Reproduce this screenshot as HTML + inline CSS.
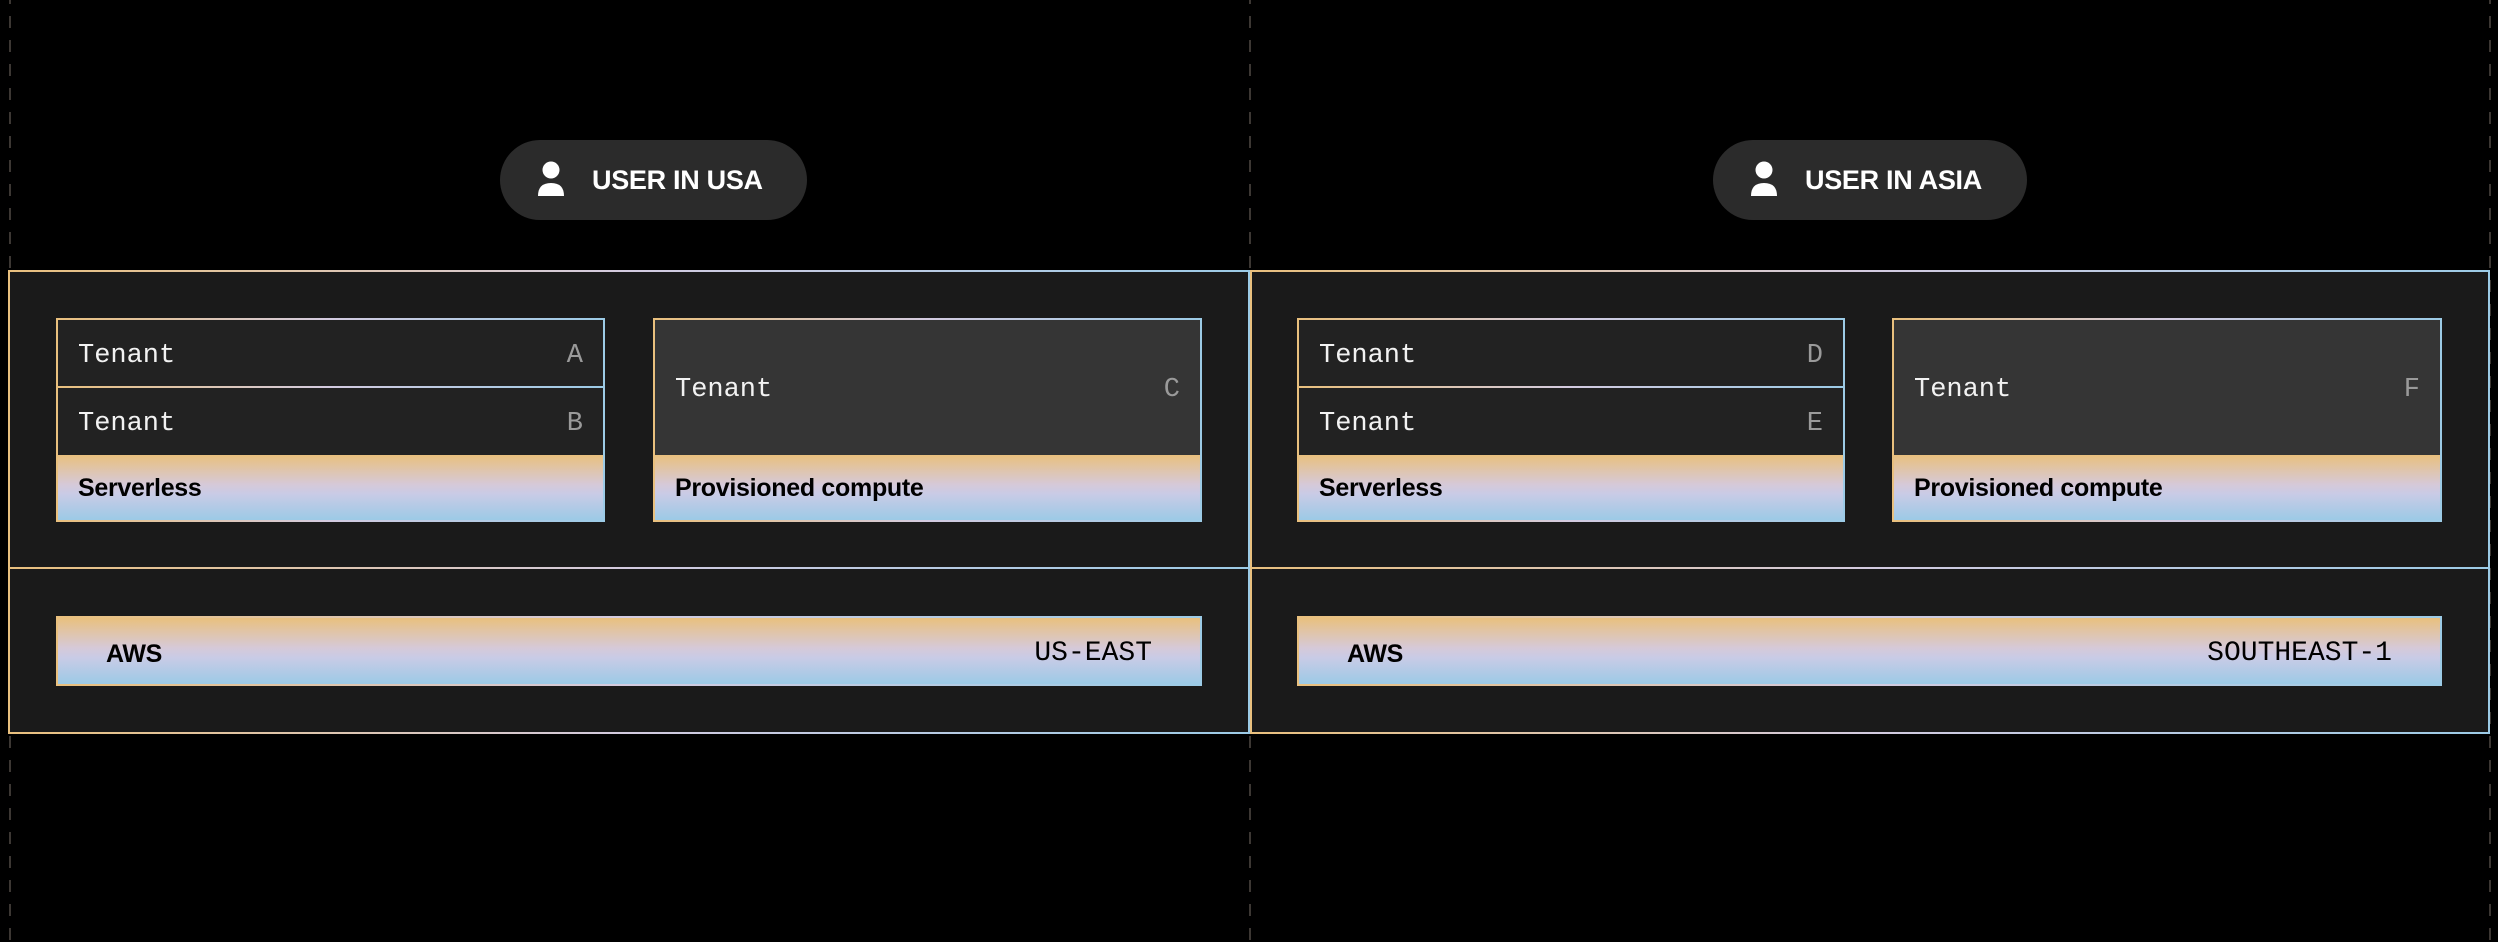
<!DOCTYPE html>
<html><head><meta charset="utf-8"><style>
*{margin:0;padding:0;box-sizing:border-box}
body{width:2498px;height:932px;background:#000;position:relative;overflow:hidden;font-family:"Liberation Sans",sans-serif}
.dash{position:absolute;width:2px;background:repeating-linear-gradient(180deg,#3c3733 0 12px,transparent 12px 24px);top:-8px;height:950px}
.pill{position:absolute;top:140px;height:80px;background:#2b2b2b;border-radius:40px;color:#fff;font-size:27px;font-weight:bold;letter-spacing:-0.3px}
.pill span{position:absolute;left:92px;top:26px;line-height:28px}
.pill svg{position:absolute;left:37px;top:20px}
.box{position:absolute;background:#1a1a1a;border:2px solid;border-image:linear-gradient(90deg,#e9c07e,#d3cbe0 50%,#9ccbe6) 1}
.card{position:absolute;border:2px solid;border-image:linear-gradient(90deg,#e9c07e,#d3cbe0 50%,#9ccbe6) 1}
.row{position:absolute;left:0;right:0;background:#222;color:#f2f2f2;font-family:"Liberation Mono",monospace;font-size:27px;padding-top:3px}
.row .t{position:absolute;left:20px}
.row .l{position:absolute;right:20px;color:#9a9a9a}
.band{position:absolute;left:0;right:0;background:linear-gradient(180deg,#e9c07e 0%,#d6c9d8 45%,#c9cbe6 60%,#9ccae6 100%);color:#000;font-size:25px;font-weight:bold;letter-spacing:-0.3px}
.sep{position:absolute;left:0;right:0;height:2px;background:linear-gradient(90deg,#e9c07e,#d3cbe0 50%,#9ccbe6)}
.mono{position:absolute;top:3px;line-height:66px;font-family:"Liberation Mono",monospace;font-weight:normal;font-size:28px;letter-spacing:0}
</style></head><body>
<div class="dash" style="left:9px"></div>
<div class="dash" style="left:1249px"></div>
<div class="dash" style="left:2489px"></div>

<div class="pill" style="left:500px;width:307px"><svg width="30" height="40" viewBox="0 0 30 40"><circle cx="14" cy="10" r="8.5" fill="#fff"/><path d="M1 36 Q1 23 14 23 Q27 23 27 36 Z" fill="#fff"/></svg><span>USER IN USA</span></div>
<div class="pill" style="left:1713px;width:314px"><svg width="30" height="40" viewBox="0 0 30 40"><circle cx="14" cy="10" r="8.5" fill="#fff"/><path d="M1 36 Q1 23 14 23 Q27 23 27 36 Z" fill="#fff"/></svg><span>USER IN ASIA</span></div>

<div class="box" style="left:8px;top:569px;width:1242px;height:165px;border-top:none"></div>
<div class="box" style="left:8px;top:270px;width:1242px;height:299px"></div>
<div class="box" style="left:1250px;top:569px;width:1240px;height:165px;border-top:none"></div>
<div class="box" style="left:1250px;top:270px;width:1240px;height:299px"></div>

<div class="card" style="left:56px;top:318px;width:549px;height:204px">
 <div class="row" style="top:0;height:66px;line-height:66px"><span class="t">Tenant</span><span class="l">A</span></div>
 <div class="sep" style="top:66px"></div>
 <div class="row" style="top:68px;height:67px;line-height:67px"><span class="t">Tenant</span><span class="l">B</span></div>
 <div class="band" style="top:135px;height:65px;line-height:66px;padding-left:20px">Serverless</div>
</div>
<div class="card" style="left:653px;top:318px;width:549px;height:204px">
 <div class="row" style="top:0;height:135px;line-height:135px;background:#353535"><span class="t">Tenant</span><span class="l">C</span></div>
 <div class="band" style="top:135px;height:65px;line-height:66px;padding-left:20px">Provisioned compute</div>
</div>
<div class="card" style="left:56px;top:616px;width:1146px;height:70px">
 <div class="band" style="top:0;height:66px;line-height:66px;padding-left:48px;padding-top:3px">AWS<span class="mono" style="right:48px">US-EAST</span></div>
</div>

<div class="card" style="left:1297px;top:318px;width:548px;height:204px">
 <div class="row" style="top:0;height:66px;line-height:66px"><span class="t">Tenant</span><span class="l">D</span></div>
 <div class="sep" style="top:66px"></div>
 <div class="row" style="top:68px;height:67px;line-height:67px"><span class="t">Tenant</span><span class="l">E</span></div>
 <div class="band" style="top:135px;height:65px;line-height:66px;padding-left:20px">Serverless</div>
</div>
<div class="card" style="left:1892px;top:318px;width:550px;height:204px">
 <div class="row" style="top:0;height:135px;line-height:135px;background:#353535"><span class="t">Tenant</span><span class="l">F</span></div>
 <div class="band" style="top:135px;height:65px;line-height:66px;padding-left:20px">Provisioned compute</div>
</div>
<div class="card" style="left:1297px;top:616px;width:1145px;height:70px">
 <div class="band" style="top:0;height:66px;line-height:66px;padding-left:48px;padding-top:3px">AWS<span class="mono" style="right:48px">SOUTHEAST-1</span></div>
</div>
</body></html>
